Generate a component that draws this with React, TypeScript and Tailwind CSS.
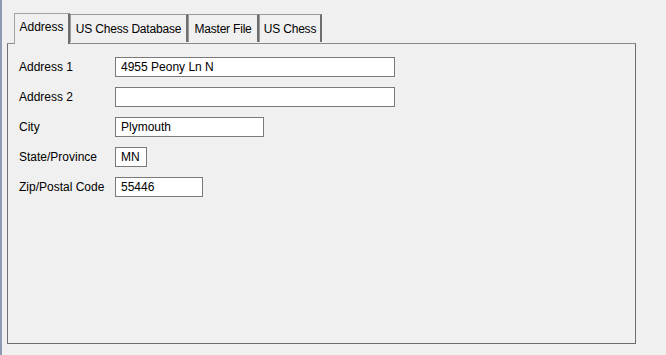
const fields = [
  { label: 'Address 1', value: '4955 Peony Ln N', width: 'w-[280px]' },
  { label: 'Address 2', value: '', width: 'w-[280px]' },
  { label: 'City', value: 'Plymouth', width: 'w-[149px]' },
  { label: 'State/Province', value: 'MN', width: 'w-[32px]' },
  { label: 'Zip/Postal Code', value: '55446', width: 'w-[88px]' },
];

const tabs = [
  { label: 'US Chess Database', width: 'w-[118px]' },
  { label: 'Master File', width: 'w-[71px]' },
  { label: 'US Chess', width: 'w-[63px]' },
];

export default function App() {
  return (
    <div className="w-[666px] h-[355px] bg-[#f0f0f0] border-l-2 border-[#8e9bb2] pt-[12px] pl-[5px] text-[12px] text-black font-['Liberation_Sans',Arial,sans-serif] overflow-hidden">
      {/* tab strip */}
      <div className="flex items-end pl-[7px] h-[31px] relative z-10">
        <div className="h-[31px] -mb-px w-[56px] bg-[#f0f0f0] border-t border-l border-[#a3a3a3] border-r-2 border-r-[#6e6e6e] flex items-start justify-center pt-[4px]">
          Address
        </div>
        {tabs.map((t) => (
          <div
            key={t.label}
            className={`${t.width} h-[28px] mb-px bg-[#f0f0f0] border-t border-l border-[#9a9a9a] border-r-2 border-r-[#6e6e6e] flex items-center justify-center whitespace-nowrap tracking-[-0.2px]`}
          >
            {t.label}
          </div>
        ))}
      </div>

      {/* panel */}
      <div className="w-[629px] h-[301px] border border-[#6d6d6d] border-t-[#8a8a8a] border-l-[#707070] pl-[11px] pt-[13px] flex flex-col gap-[10px]">
        {fields.map((f) => (
          <div key={f.label} className="flex items-center h-[20px]">
            <div className="w-[96px] shrink-0">{f.label}</div>
            <div className={`${f.width} h-[20px] bg-white border border-[#7a7a7a] pl-[5px] flex items-center`}>
              {f.value}
            </div>
          </div>
        ))}
      </div>
    </div>
  );
}
